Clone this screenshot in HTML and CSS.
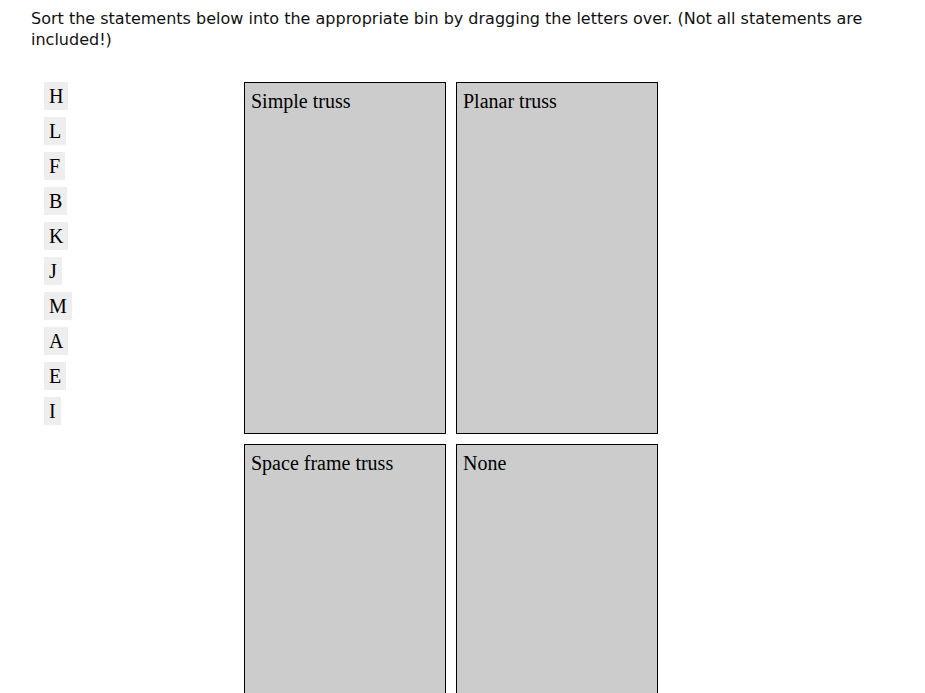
FILE: index.html
```html
<!DOCTYPE html>
<html lang="en">
<head>
  <meta charset="UTF-8" />
  <title>Sort the statements</title>
  <link rel="stylesheet" href="styles.css">
</head>
<body>
  <p class="prompt">Sort the statements below into the appropriate bin by dragging the letters over. (Not all statements are included!)</p>

  <div class="board">
    <div class="letters">
      <div class="letter">H</div>
      <div class="letter">L</div>
      <div class="letter">F</div>
      <div class="letter">B</div>
      <div class="letter">K</div>
      <div class="letter">J</div>
      <div class="letter">M</div>
      <div class="letter">A</div>
      <div class="letter">E</div>
      <div class="letter">I</div>
    </div>

    <div class="bins">
      <div class="bin">Simple truss</div>
      <div class="bin">Planar truss</div>
      <div class="bin">Space frame truss</div>
      <div class="bin">None</div>
    </div>
  </div>
</body>
</html>
```

FILE: styles.css
```css
body {
  margin: 8px;
  font-family: "Liberation Serif", "Times New Roman", serif;
  font-size: 20px;
  color: #000;
  background: #fff;
}

.prompt {
  font-family: "DejaVu Sans", sans-serif;
  font-size: 16px;
  line-height: 21px;
  margin: 0 0 0 23px;
  max-width: 860px;
  color: #111;
}

.board {
  display: flex;
  align-items: flex-start;
  margin-top: 32px;
  padding-left: 36px;
}

.letters {
  width: 200px;
  display: flex;
  flex-direction: column;
  align-items: flex-start;
  gap: 7px;
}

.letter {
  background: #eee;
  padding: 3px 5px;
  line-height: 22px;
  cursor: move;
}

.bins {
  display: grid;
  grid-template-columns: repeat(2, 202px);
  grid-auto-rows: 352px;
  gap: 10px;
}

.bin {
  background: #ccc;
  border: 1px solid #000;
  padding: 7px 6px 5px;
  line-height: 23px;
}
```
